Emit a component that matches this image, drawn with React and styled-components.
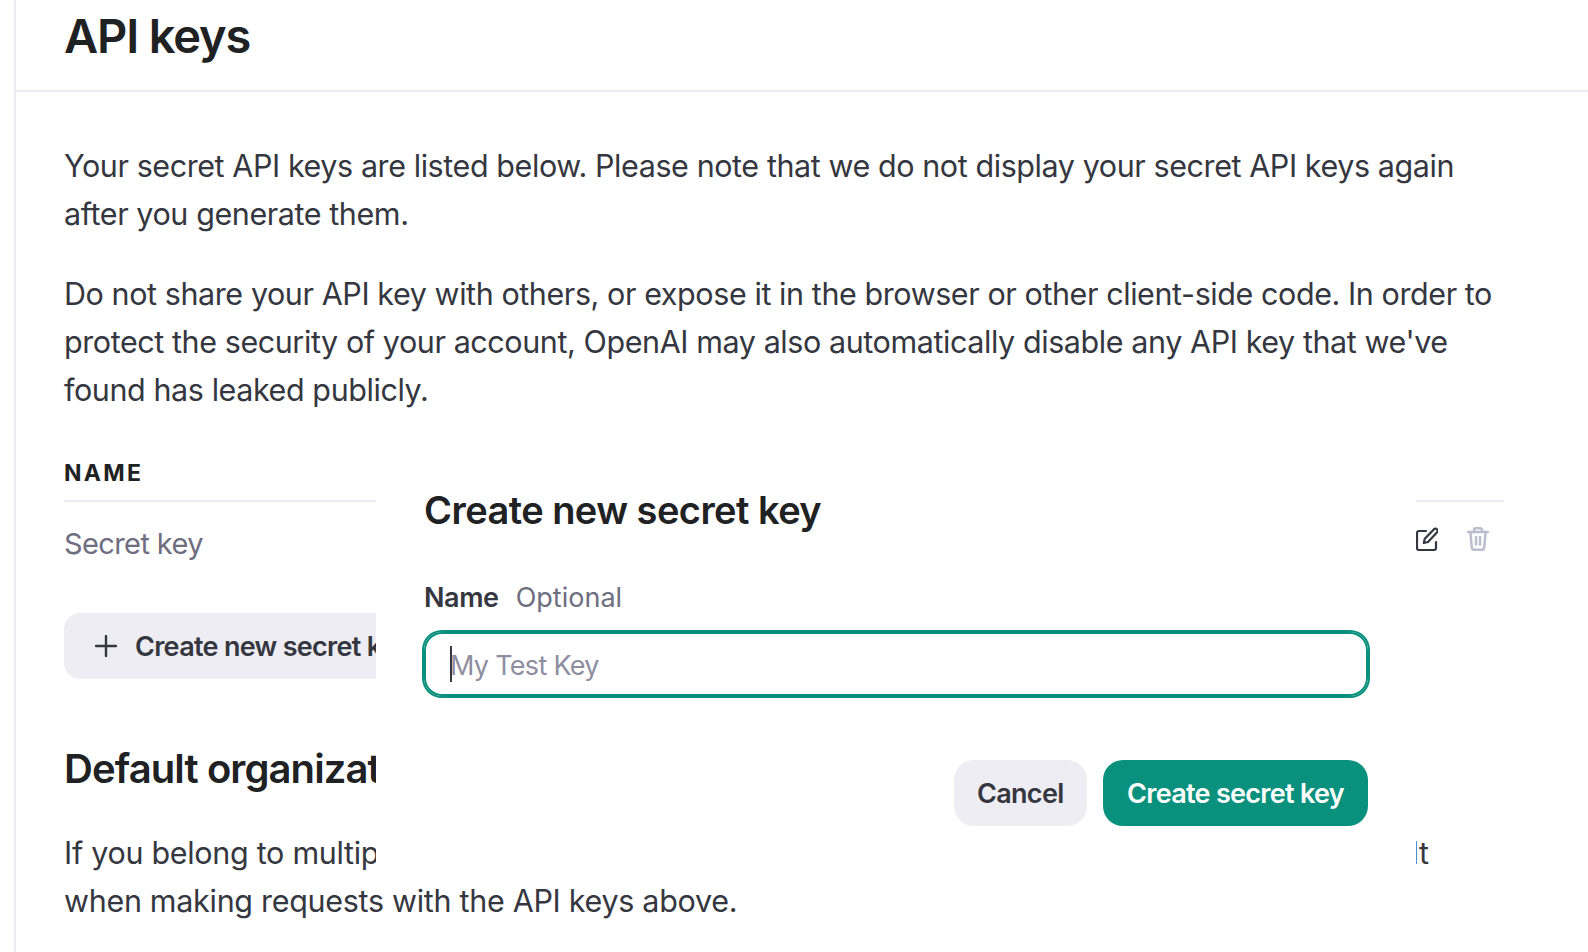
import React from "react";
import styled, { createGlobalStyle } from "styled-components";

const Global = createGlobalStyle`
  html, body { margin: 0; padding: 0; background: #fff; }
  body { font-family: Inter, "Liberation Sans", sans-serif; color: #353740; }
  * { box-sizing: border-box; }
`;

const Viewport = styled.div`
  position: relative;
  width: 1588px;
  height: 952px;
  overflow: hidden;
  background: #fff;
  padding-left: 14px;
`;

const Main = styled.main`
  border-left: 2px solid #edecf4;
  min-height: 952px;
`;

const Header = styled.header`
  height: 92px;
  padding: 8px 48px 0;
  border-bottom: 2px solid #edecf4;
`;

const Title = styled.h1`
  margin: 0;
  font-size: 47px;
  line-height: 56px;
  font-weight: 600;
  letter-spacing: -1.15px;
  color: #202123;
`;

const Content = styled.div`
  padding: 50px 84px 0 48px;
`;

const Paragraph = styled.p`
  margin: 0 0 32px;
  font-size: 30.5px;
  line-height: 48px;
  letter-spacing: ${(p) => p.$tracking || "-0.42px"};
  color: #353740;
`;

const KeyTable = styled.div`
  margin-top: 38px;
`;

const TableHead = styled.div`
  height: 50px;
  border-bottom: 2px solid #edecf4;
  font-size: 23px;
  line-height: 42px;
  font-weight: 700;
  letter-spacing: 2.3px;
  color: #202123;
  text-transform: uppercase;
`;

const TableRow = styled.div`
  display: flex;
  align-items: center;
  justify-content: space-between;
  height: 82px;
  padding-right: 15px;
`;

const KeyName = styled.span`
  font-size: 29px;
  letter-spacing: -0.6px;
  color: #6e6e80;
`;

const RowActions = styled.div`
  display: flex;
  gap: 29px;
  margin-top: -8px;
`;

const AddButton = styled.button`
  display: flex;
  align-items: center;
  gap: 18px;
  height: 66px;
  width: 460px;
  margin-top: 29px;
  padding: 0 31px;
  border: 0;
  border-radius: 16px;
  background: #eeedf3;
  font: 560 27px Inter, "Liberation Sans", sans-serif;
  letter-spacing: -0.7px;
  color: #353740;
`;

const SectionTitle = styled.h2`
  margin: 63px 0 33px;
  font-size: 40px;
  line-height: 54px;
  font-weight: 600;
  letter-spacing: -0.9px;
  color: #202123;
`;

const Modal = styled.div`
  position: absolute;
  left: 376px;
  top: 470px;
  width: 1040px;
  height: 410px;
  padding: 18px 48px 0;
  background: #fff;
`;

const ModalTitle = styled.h2`
  margin: 0;
  font-size: 38px;
  line-height: 44px;
  font-weight: 600;
  letter-spacing: -0.55px;
  color: #202123;
`;

const FieldLabel = styled.label`
  display: flex;
  gap: 17px;
  margin-top: 48px;
  font-size: 27px;
  line-height: 36px;
`;

const LabelName = styled.span`
  font-weight: 600;
  letter-spacing: -0.4px;
  color: #353740;
`;

const LabelHint = styled.span`
  letter-spacing: 0;
  color: #6e6e80;
`;

const FieldInput = styled.div`
  display: flex;
  align-items: center;
  height: 64px;
  margin: 16px 0 0;
  padding: 2px 0 0 26px;
  border-radius: 18px;
  box-shadow: 0 0 0 2px #09917d inset, 0 0 0 2px #09917d;
  font-size: 27px;
  letter-spacing: -0.7px;
  color: #8e8ea0;
`;

const Caret = styled.span`
  width: 2px;
  height: 36px;
  margin: -2px -2px 0 0;
  background: #353740;
`;

const ModalFooter = styled.div`
  display: flex;
  justify-content: flex-end;
  gap: 16px;
  margin-top: 64px;
`;

const ModalButton = styled.button`
  height: 66px;
  padding: 0 ${(p) => (p.$primary ? "24px" : "23.5px")};
  border: 0;
  border-radius: 20px;
  background: ${(p) => (p.$primary ? "#09917d" : "#eeedf3")};
  color: ${(p) => (p.$primary ? "#fff" : "#353740")};
  font: 560 27px Inter, "Liberation Sans", sans-serif;
  letter-spacing: -0.7px;
`;

const PlusIcon = () => (
  <svg width="22" height="22" viewBox="0 0 22 22" fill="none" stroke="#353740" strokeWidth="2.4" strokeLinecap="round">
    <path d="M11 1v20M1 11h20" />
  </svg>
);

const EditIcon = () => (
  <svg width="22" height="24" viewBox="0 0 22 24" fill="none" stroke="#353740" strokeWidth="2.2" strokeLinecap="round" strokeLinejoin="round">
    <path d="M10 4H3a2 2 0 0 0-2 2v15a2 2 0 0 0 2 2h15a2 2 0 0 0 2-2v-6" />
    <path d="M18 2.2a2.2 2.2 0 0 1 3.1 3.1L12 15l-4.2 1 1-4.2z" />
  </svg>
);

const TrashIcon = () => (
  <svg width="22" height="24" viewBox="0 0 22 24" fill="none" stroke="#bdbccd" strokeWidth="2.5" strokeLinecap="round" strokeLinejoin="round">
    <path d="M1.2 5h19.6" />
    <path d="M3.4 5l1.4 15.6A2.2 2.2 0 0 0 7 22.8h8a2.2 2.2 0 0 0 2.2-2.2L18.6 5" />
    <path d="M7 5V3.2A2 2 0 0 1 9 1.2h4a2 2 0 0 1 2 2V5" />
    <path d="M9 10v7.5M13 10v7.5" />
  </svg>
);

export default function App() {
  return (
    <Viewport>
      <Global />
      <Main>
        <Header>
          <Title>API keys</Title>
        </Header>
        <Content>
          <Paragraph>
            Your secret API keys are listed below. Please note that we do not display your secret API keys again after you generate them.
          </Paragraph>
          <Paragraph>
            Do not share your API key with others, or expose it in the browser or other client-side code. In order to protect the security of your account, OpenAI may also automatically disable any API key that we've found has leaked publicly.
          </Paragraph>
          <KeyTable>
            <TableHead>Name</TableHead>
            <TableRow>
              <KeyName>Secret key</KeyName>
              <RowActions>
                <EditIcon />
                <TrashIcon />
              </RowActions>
            </TableRow>
          </KeyTable>
          <AddButton>
            <PlusIcon />
            Create new secret key
          </AddButton>
          <SectionTitle>Default organization</SectionTitle>
          <Paragraph $tracking="-0.3px">
            If you belong to multiple organizations, this setting controls which organization is used by default when making requests with the API keys above.
          </Paragraph>
        </Content>
      </Main>
      <Modal>
        <ModalTitle>Create new secret key</ModalTitle>
        <FieldLabel>
          <LabelName>Name</LabelName>
          <LabelHint>Optional</LabelHint>
        </FieldLabel>
        <FieldInput>
          <Caret />
          My Test Key
        </FieldInput>
        <ModalFooter>
          <ModalButton>Cancel</ModalButton>
          <ModalButton $primary>Create secret key</ModalButton>
        </ModalFooter>
      </Modal>
    </Viewport>
  );
}
